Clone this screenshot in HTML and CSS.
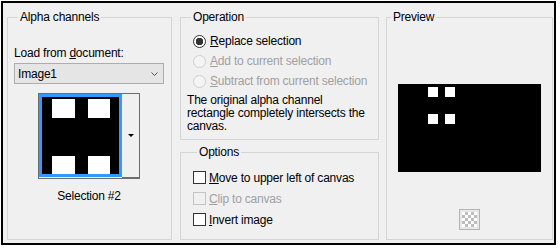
FILE: index.html
```html
<!DOCTYPE html>
<html lang="en">
<head>
  <meta charset="UTF-8">
  <title>Load Selection From Alpha Channel</title>
  <link rel="stylesheet" href="styles.css">
</head>
<body>

  <div class="dialog">
    <fieldset class="group group-alpha">
      <legend>Alpha channels</legend>
      <div class="field-label">Load from <u>d</u>ocument:</div>
      <div class="combo">
        <span>Image1</span>
        <svg width="7" height="4" viewBox="0 0 7 4"><path d="M0.5 0.5 L3.5 3.5 L6.5 0.5" fill="none" stroke="#555" stroke-width="1"/></svg>
      </div>
      <div class="picker">
        <div class="thumb">
          <svg width="77" height="77" viewBox="0 0 77 77">
            <rect width="77" height="77" fill="#000"/>
            <rect x="10" y="2" width="23" height="19" fill="#fff"/>
            <rect x="46" y="2" width="22" height="19" fill="#fff"/>
            <rect x="10" y="59" width="23" height="18" fill="#fff"/>
            <rect x="46" y="59" width="22" height="18" fill="#fff"/>
          </svg>
        </div>
        <div class="picker-btn"><span class="arrow"></span></div>
      </div>
      <div class="caption">Selection #2</div>
    </fieldset>

    <div class="col-mid">
      <fieldset class="group group-op">
        <legend>Operation</legend>
        <label class="radio checked"><span class="dot"></span><span><u>R</u>eplace selection</span></label>
        <label class="radio disabled"><span class="dot"></span><span><u>A</u>dd to current selection</span></label>
        <label class="radio disabled"><span class="dot"></span><span><u>S</u>ubtract from current selection</span></label>
        <p class="note">The original alpha channel<br>rectangle completely intersects the<br>canvas.</p>
      </fieldset>
      <fieldset class="group group-opts">
        <legend>Options</legend>
        <label class="check"><span class="box"></span><span><u>M</u>ove to upper left of canvas</span></label>
        <label class="check disabled"><span class="box"></span><span><u>C</u>lip to canvas</span></label>
        <label class="check"><span class="box"></span><span><u>I</u>nvert image</span></label>
      </fieldset>
    </div>

    <fieldset class="group group-preview">
      <legend>Preview</legend>
      <div class="preview">
        <svg width="143" height="88" viewBox="0 0 143 88">
          <rect width="143" height="88" fill="#000"/>
          <rect x="30" y="3" width="10" height="10" fill="#fff"/>
          <rect x="47" y="3" width="10" height="10" fill="#fff"/>
          <rect x="30" y="30" width="10" height="10" fill="#fff"/>
          <rect x="47" y="30" width="10" height="10" fill="#fff"/>
        </svg>
      </div>
      <div class="checker"><span></span></div>
    </fieldset>
  </div>

</body>
</html>
```

FILE: styles.css
```css
body {
  margin: 0;
  background: #fff;
  font-family: "Liberation Sans", Arial, sans-serif;
  font-size: 12px;
  letter-spacing: -0.2px;
  color: #000;
}
u {
  text-underline-offset: 1px;
}
.dialog {
  margin: 1px 0 0 1px;
  width: 555px;
  height: 244px;
  box-sizing: border-box;
  border: 2px solid #000;
  background: #f0f0f0;
  display: flex;
  align-items: flex-start;
  padding: 7px 1px 0 4px;
  white-space: nowrap;
}
.group {
  margin: 0;
  padding: 0;
  min-width: 0;
  box-sizing: border-box;
  border: 1px solid #d5d5d5;
}
.group legend {
  margin-left: 4px;
  padding: 0 2px;
  line-height: 14px;
}
.group-alpha {
  width: 165px;
  height: 230px;
  padding: 22px 7px 0 6px;
  margin-right: 8px;
}
.field-label {
  line-height: 14px;
}
.combo {
  margin-top: 3px;
  height: 21px;
  box-sizing: border-box;
  border: 1px solid #adadad;
  background: #e5e5e5;
  display: flex;
  align-items: center;
  justify-content: space-between;
  padding: 0 5px 0 3px;
}
.picker {
  width: 102px;
  height: 86px;
  margin: 9px auto 0;
  box-sizing: border-box;
  border: 1px solid #6d6d6d;
  display: flex;
}
.thumb {
  width: 83px;
  height: 83px;
  box-sizing: border-box;
  border: 3px solid #3399ff;
  background: #000;
}
.thumb svg {
  display: block;
}
.picker-btn {
  flex: 1;
  display: flex;
  align-items: center;
  justify-content: center;
  border-bottom: 1px solid #6d6d6d;
}
.arrow {
  border-left: 3px solid transparent;
  border-right: 3px solid transparent;
  border-top: 3px solid #000;
}
.caption {
  margin-top: 10px;
  text-align: center;
  line-height: 14px;
}
.col-mid {
  width: 199px;
  margin-right: 7px;
  display: flex;
  flex-direction: column;
  gap: 5px;
}
.group-op {
  height: 130px;
  padding: 7px 0 0 6px;
}
.radio {
  display: flex;
  align-items: center;
  gap: 4px;
  height: 20px;
  margin-left: 6px;
}
.radio .dot {
  width: 13px;
  height: 13px;
  box-sizing: border-box;
  border: 1px solid #333;
  border-radius: 50%;
  background: #fff;
}
.radio.checked .dot {
  background: radial-gradient(circle, #333 3.5px, #fff 4px);
}
.disabled {
  color: #a0a0a0;
}
.radio.disabled .dot {
  border-color: #cfcfcf;
  background: #f4f4f4;
}
.note {
  margin: 3px 0 0;
  line-height: 13px;
}
.group-opts {
  height: 95px;
  padding: 8px 0 0 12px;
}
.check {
  display: flex;
  align-items: center;
  gap: 3px;
  height: 21px;
}
.check .box {
  width: 13px;
  height: 13px;
  box-sizing: border-box;
  border: 1px solid #333;
  background: #fff;
}
.check.disabled .box {
  border-color: #c4c4c4;
  background: #f0f0f0;
}
.group-preview {
  width: 167px;
  height: 230px;
}
.preview {
  width: 143px;
  height: 88px;
  margin: 60px auto 0;
}
.preview svg {
  display: block;
}
.checker {
  width: 21px;
  height: 21px;
  margin: 37px auto 0;
  box-sizing: border-box;
  border: 1px solid #b4b4b4;
  padding: 2px;
  background: #e8e8e8;
}
.checker span {
  display: block;
  width: 15px;
  height: 15px;
  background: repeating-conic-gradient(#bdbdbd 0 25%, #fff 0 50%) 0 0 / 6px 6px;
}
```
